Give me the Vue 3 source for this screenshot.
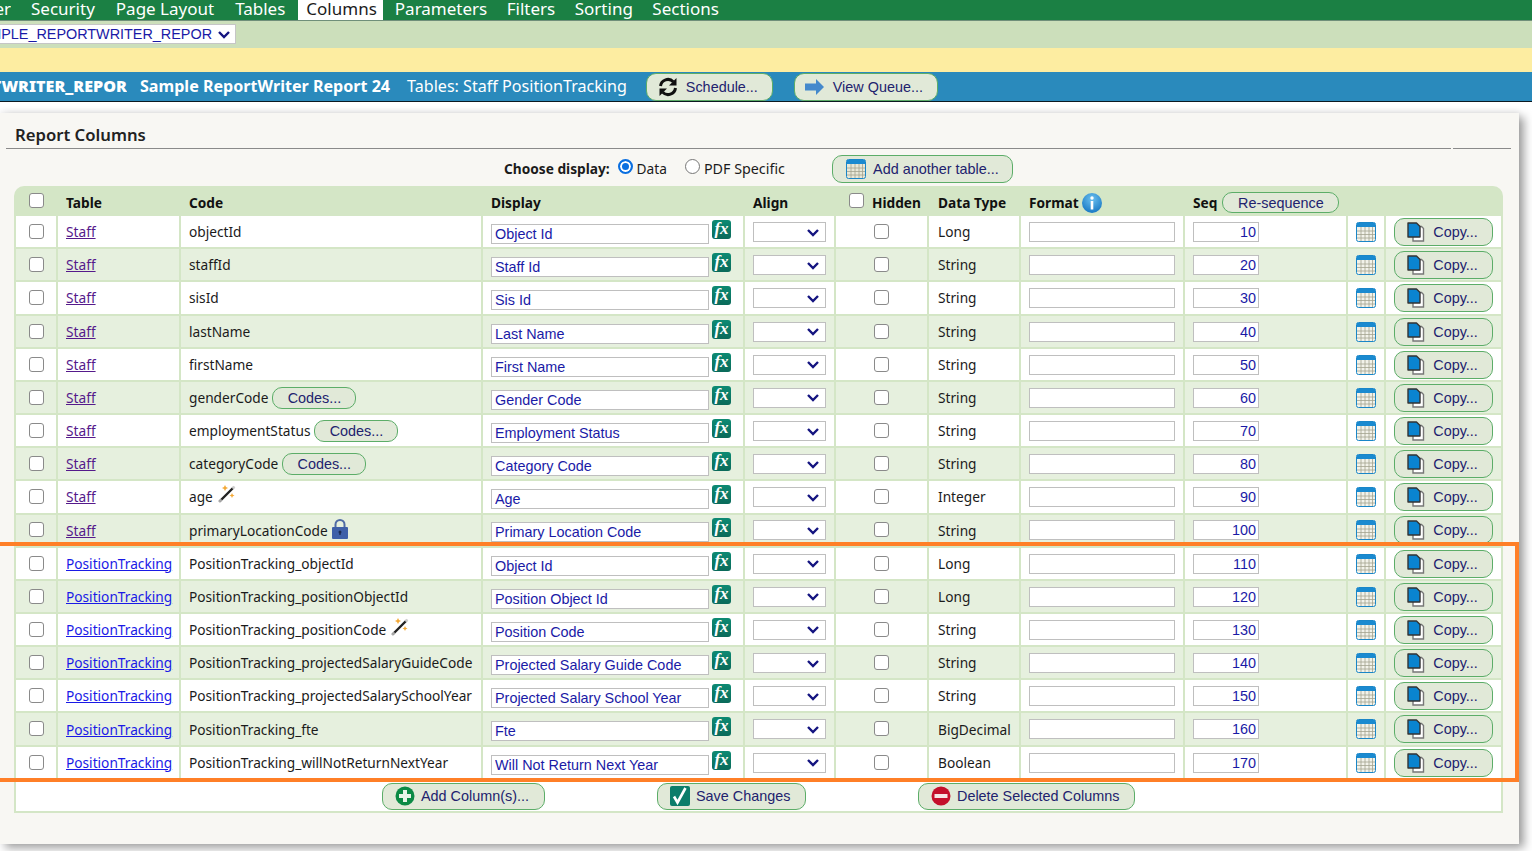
<script setup>
const nav = ['Security', 'Page Layout', 'Tables', 'Columns', 'Parameters', 'Filters', 'Sorting', 'Sections']
const staff = [
  ['objectId', 'Object Id'], ['staffId', 'Staff Id'], ['sisId', 'Sis Id'], ['lastName', 'Last Name'],
  ['firstName', 'First Name'], ['genderCode', 'Gender Code', 'codes'], ['employmentStatus', 'Employment Status', 'codes'],
  ['categoryCode', 'Category Code', 'codes'], ['age', 'Age', 'wand', 'Integer'], ['primaryLocationCode', 'Primary Location Code', 'lock']
]
const tracking = [
  ['PositionTracking_objectId', 'Object Id', '', 'Long'], ['PositionTracking_positionObjectId', 'Position Object Id', '', 'Long'],
  ['PositionTracking_positionCode', 'Position Code', 'wand'], ['PositionTracking_projectedSalaryGuideCode', 'Projected Salary Guide Code'],
  ['PositionTracking_projectedSalarySchoolYear', 'Projected Salary School Year'], ['PositionTracking_fte', 'Fte', '', 'BigDecimal'],
  ['PositionTracking_willNotReturnNextYear', 'Will Not Return Next Year', '', 'Boolean']
]
const rows = [
  ...staff.map(([code, display, extra, type], i) => ({ table: 'Staff', code, display, extra, type: type || (i === 0 ? 'Long' : 'String'), visited: true })),
  ...tracking.map(([code, display, extra, type]) => ({ table: 'PositionTracking', code, display, extra, type: type || 'String', visited: false }))
].map((r, i) => ({ ...r, seq: (i + 1) * 10 }))
</script>

<template>
  <div class="page">
    <nav class="nav">
      <span class="nav-cut">Designer</span>
      <a v-for="n in nav" :key="n" class="nav-item" :class="{ active: n === 'Columns' }">{{ n }}</a>
    </nav>
    <div class="subbar">
      <div class="pick-cut">
        <select class="pick"><option>SAMPLE_REPORTWRITER_REPOR</option></select>
      </div>
    </div>
    <div class="notice"></div>
    <header class="titlebar">
      <div class="id-cut"><b>SAMPLE_REPORTWRITER_REPOR</b></div>
      <b class="report-name">Sample ReportWriter Report 24</b>
      <span class="report-tables">Tables: Staff PositionTracking</span>
      <button class="btn schedule">
        <svg width="20" height="20" viewBox="0 0 20 20" fill="none" stroke="#111" stroke-width="3">
          <path d="M2.500 9a7.500 7.500 0 0 1 12.800-4.300" /><path d="M17.500 11a7.500 7.500 0 0 1-12.800 4.300" />
          <path d="M18.500 1v7.500H11z" fill="#111" stroke="none" /><path d="M1.500 19v-7.500H9z" fill="#111" stroke="none" />
        </svg>
        Schedule...
      </button>
      <button class="btn queue">
        <svg width="20" height="16" viewBox="0 0 20 16"><path d="M0 4.5h11V0l8 8-8 8v-4.5H0z" fill="#4489cc" /></svg>
        View Queue...
      </button>
    </header>

    <main class="panel">
      <div class="heading"><h2>Report Columns</h2></div>
      <div class="rules"><i></i><i></i></div>
      <div class="choose">
        <b>Choose display:</b>
        <label class="radio-label first"><input type="radio" name="display" class="radio" checked /> Data</label>
        <label class="radio-label pdf"><input type="radio" name="display" class="radio" /> PDF Specific</label>
        <button class="btn add-table">
          <svg class="cal" width="20" height="20" viewBox="0 0 20 20">
            <rect x=".5" y=".5" width="19" height="19" rx="2" fill="#e8e8d8" stroke="#1a86c8" />
            <path d="M1 1h18v4H1z" fill="#1a8ad0" />
            <path d="M1 9h18M1 12.500h18M1 16h18M5 5v14M9 5v14M13 5v14M16.500 5v14" stroke="#a3a38f" stroke-width=".8" />
          </svg>
          Add another table...
        </button>
      </div>

      <section class="grid">
        <div class="row head">
          <div class="cell center"><input type="checkbox" class="check" /></div>
          <div class="cell">Table</div>
          <div class="cell">Code</div>
          <div class="cell">Display</div>
          <div class="cell">Align</div>
          <div class="cell hidden-head"><input type="checkbox" class="check" /><span>Hidden</span></div>
          <div class="cell type">Data Type</div>
          <div class="cell"><span>Format</span>
            <svg class="info" width="20" height="20" viewBox="0 0 20 20">
              <defs>
                <radialGradient id="infoFill" cx=".5" cy=".3" r=".8">
                  <stop offset="0" stop-color="#6cc0ef" /><stop offset="1" stop-color="#0d6fbe" />
                </radialGradient>
              </defs>
              <circle cx="10" cy="10" r="10" fill="url(#infoFill)" />
              <circle cx="10" cy="5" r="1.700" fill="#fff" /><path d="M8.700 8h2.600v8.500H8.700z" fill="#fff" />
            </svg>
          </div>
          <div class="cell"><span>Seq</span><button class="btn reseq">Re-sequence</button></div>
          <div class="cell"></div>
          <div class="cell"></div>
        </div>
        <div class="body">
          <div v-for="(r, i) in rows" :key="r.code" class="row" :class="i % 2 ? 'alt' : 'plain'">
            <div class="cell center"><input type="checkbox" class="check" /></div>
            <div class="cell"><a class="link" :class="{ visited: r.visited }">{{ r.table }}</a></div>
            <div class="cell code">
              <span>{{ r.code }}</span>
              <button v-if="r.extra === 'codes'" class="btn codes">Codes...</button>
              <svg v-if="r.extra === 'wand'" class="wand" width="18" height="18" viewBox="0 0 18 18">
                <path d="M1.500 16.500 15.500 2.500" stroke="#222" stroke-width="2.400" />
                <path d="M1 17l2.500-2.500" stroke="#aaa" stroke-width="2.400" />
                <path d="M14.500 3.500 16.500 1.500" stroke="#ccc" stroke-width="2.400" />
                <path d="M7 0l1 2 2 1-2 1-1 2-1-2-2-1 2-1zM14 8l.8 1.700 1.700.8-1.700.8-.8 1.700-.8-1.700-1.700-.8 1.700-.8z" fill="#f3a937" />
              </svg>
              <svg v-if="r.extra === 'lock'" class="lock" width="16" height="20" viewBox="0 0 16 20">
                <path d="M3.500 9V5.500a4.500 4.500 0 0 1 9 0V9" fill="none" stroke="#4f6ba5" stroke-width="2" />
                <rect y="8" width="16" height="12" rx="1" fill="#3f60a8" />
                <circle cx="8" cy="13" r="1.500" fill="#1d2d55" /><path d="M7.300 13h1.400v3H7.300z" fill="#1d2d55" />
              </svg>
            </div>
            <div class="cell display">
              <input class="input name" :value="r.display" />
              <span class="fx">fx</span>
            </div>
            <div class="cell"><select class="align"><option></option></select></div>
            <div class="cell center"><input type="checkbox" class="check" /></div>
            <div class="cell type">{{ r.type }}</div>
            <div class="cell"><input class="input format" /></div>
            <div class="cell"><input class="input seq" :value="r.seq" /></div>
            <div class="cell center">
              <svg class="cal row-cal" width="20" height="20" viewBox="0 0 20 20">
                <rect x=".5" y=".5" width="19" height="19" rx="2" fill="#f2f2ea" stroke="#1a86c8" />
                <path d="M1 1h18v4H1z" fill="#1a8ad0" />
                <path d="M1 9h18M1 12.500h18M1 16h18M5 5v14M9 5v14M13 5v14M16.500 5v14" stroke="#a3a38f" stroke-width=".8" />
              </svg>
            </div>
            <div class="cell center">
              <button class="btn copy">
                <svg width="18" height="20" viewBox="0 0 18 20">
                  <path d="M6 4.500h8.500l2 2V19H6z" fill="#fff" stroke="#777" stroke-width="1.400" />
                  <path d="M1 1h8.500L13 4.500V15H1z" fill="#0a84d0" stroke="#333" stroke-width="1.400" stroke-linejoin="round" />
                </svg>
                Copy...
              </button>
            </div>
          </div>
        </div>
        <footer class="actions">
          <button class="btn action add">
            <svg width="20" height="20" viewBox="0 0 20 20">
              <circle cx="10" cy="10" r="9.500" fill="#0b8a45" />
              <path d="M8 4h4v4h4v4h-4v4H8v-4H4V8h4z" fill="#e8f4e8" />
            </svg>
            Add Column(s)...
          </button>
          <button class="btn action save">
            <svg width="20" height="20" viewBox="0 0 20 20">
              <rect width="20" height="20" rx="2" fill="#0b7d6a" />
              <path d="M4 10.500l3.500 6L15.500 2" fill="none" stroke="#fff" stroke-width="2.600" />
            </svg>
            Save Changes
          </button>
          <button class="btn action del">
            <svg width="20" height="20" viewBox="0 0 20 20">
              <circle cx="10" cy="10" r="9.500" fill="#c4102c" />
              <path d="M3.500 8h13v4h-13z" fill="#f6e6e6" />
            </svg>
            Delete Selected Columns
          </button>
        </footer>
      </section>
    </main>
    <div class="highlight"></div>
  </div>
</template>

<style>
html, body { margin: 0; background: #fff; overflow: hidden; }
</style>

<style scoped>
.page {
  position: relative;
  width: 1532px;
  height: 851px;
  overflow: hidden;
  font-family: "Noto Sans", "Open Sans", sans-serif;
  color: #1b1b1b;
  background: #fff;
}
.nav {
  display: flex;
  height: 20px;
  background: #1b8044;
  border-bottom: 1px solid #6f8f7a;
  font-size: 17px;
  line-height: 17px;
  color: #fff;
}
.nav-cut {
  width: 11px;
  margin-right: 20px;
  display: flex;
  justify-content: flex-end;
  overflow: hidden;
  white-space: nowrap;
}
.nav-item { margin-right: 21px; white-space: nowrap; }
.nav-item.active { background: #fff; color: #1b1b1b; padding: 0 6px 0 8px; margin: 0 12px 0 -8px; }
.active ~ .nav-item { margin-right: 19.500px; }
.subbar {
  height: 27px;
  background: #ccdfbb;
  box-sizing: border-box;
  padding-top: 3px;
}
.pick-cut { width: 236px; height: 20px; display: flex; justify-content: flex-end; overflow: hidden; }
.pick {
  flex: none;
  width: 267px;
  height: 20px;
  padding: 0 22px 0 0;
  appearance: none;
  border: 1px solid #c6c6c6;
  background: #fff url("data:image/svg+xml,%3Csvg xmlns='http://www.w3.org/2000/svg' width='14' height='9'%3E%3Cpath d='M2 2l5 5 5-5' fill='none' stroke='%23141480' stroke-width='2.400'/%3E%3C/svg%3E") no-repeat right 4px center;
  color: #1a1aa6;
  font: 14.400px "Liberation Sans", sans-serif;
}
.notice { height: 24px; background: #fdeda1; }
.titlebar {
  display: flex;
  align-items: center;
  height: 29px;
  background: #2a8abc;
  border-bottom: 1px solid #0c1a22;
  color: #fff;
  font-size: 16.100px;
  white-space: nowrap;
}
.id-cut, .report-name, .report-tables { margin-bottom: 2px; }
.id-cut { width: 127px; display: flex; justify-content: flex-end; overflow: hidden; font-weight: 700; }
.report-name { margin-left: 13px; }
.report-tables { margin-left: 17px; }
.btn {
  display: inline-flex;
  align-items: center;
  justify-content: center;
  gap: 8px;
  box-sizing: border-box;
  background: #e1e9d8;
  border: 1px solid #5cad68;
  border-radius: 10px;
  color: #22226e;
  font: 14.400px "Liberation Sans", sans-serif;
  padding: 0;
  white-space: nowrap;
}
.schedule { width: 127px; height: 28px; margin-left: 19px; padding-right: 3px; }
.queue { width: 144px; height: 28px; margin-left: 21px; padding-right: 4px; }
.panel {
  position: relative;
  box-sizing: border-box;
  width: 1519px;
  height: 731px;
  margin-top: 11px;
  background: #f8f7f3;
  box-shadow: 5px 4px 9px rgba(0, 0, 0, .38), 0 -3px 6px rgba(0, 0, 0, .05);
}
.heading { height: 35px; box-sizing: border-box; padding: 11px 0 0 15px; }
h2 { margin: 0; font-size: 16.700px; line-height: 22px; font-weight: 600; color: #222; }
.rules { display: flex; gap: 2px; margin-left: 6px; height: 1px; }
.rules i { background: #8a8a8a; width: 1445px; }
.rules i + i { width: 58px; }
.choose {
  display: flex;
  align-items: center;
  height: 37px;
  padding: 2px 0 0 504px;
  box-sizing: border-box;
  font-size: 13.700px;
}
.choose b { font-weight: 700; }
.radio-label { display: inline-flex; align-items: center; gap: 4px; }
.radio-label.first { margin-left: 8px; margin-right: 18px; }
.radio-label.pdf { font-size: 14.300px; }
.radio {
  appearance: none;
  width: 15px;
  height: 15px;
  margin: -4px 0 0;
  border: 1px solid #777;
  border-radius: 50%;
  background: #fff;
}
.radio:checked { border: 2px solid #0a6fe0; box-shadow: inset 0 0 0 2px #fff; background: #0a6fe0; }
.add-table { width: 181px; height: 28px; margin-left: 47px; gap: 7px; }
.grid {
  width: 1489px;
  margin-left: 14px;
  background: #d4e6c6;
  border-radius: 10px 10px 0 0;
}
.row {
  display: grid;
  grid-template-columns: 40px 121px 300px 260px 89px 91px 90px 162px 161px 36px 115px;
  column-gap: 2px;
  padding: 0 2px;
  height: 31.170px;
}
.body { display: flex; flex-direction: column; gap: 2px; }
.head { height: 30.100px; font-size: 13.700px; font-weight: 700; color: #111; }
.head .cell { background: transparent; padding-top: 3px; box-sizing: border-box; }
.head .cell.center { padding-top: 0; padding-bottom: 1px; }
.plain .cell { background: #fff; }
.alt .cell { background: #e6f0de; }
.cell {
  display: flex;
  align-items: center;
  padding-left: 8px;
  font-size: 13.700px;
  white-space: pre;
  min-width: 0;
}
.cell.center { padding-left: 0; justify-content: center; }
.cell.type { padding-left: 9px; }
.hidden-head { padding-left: 13px; }
.hidden-head span { margin-left: 8px; }
.head .hidden-head .check { margin-top: -4px; }
.check {
  appearance: none;
  width: 15px;
  height: 15px;
  margin: -.200px 0 0;
  border: 1.500px solid #8a8a8a;
  border-radius: 3px;
  background: #fff;
}
.link { color: #1a1ae6; text-decoration: underline; }
.link.visited { color: #551a8b; }
.codes { width: 84px; height: 22px; margin: .800px 0 0 4px; }
.wand { margin: -6px 0 0 5px; }
.lock { margin: -2px 0 0 4px; }
.input {
  box-sizing: border-box;
  height: 20px;
  border: 1.500px solid #bfbfbf;
  background: #fff;
  color: #1a1aa6;
  font: 14.400px "Liberation Sans", sans-serif;
  padding: 0 2px;
  outline: none;
}
.name { width: 218px; margin-top: 4.800px; padding-left: 3px; }
.fx {
  width: 19px;
  height: 19px;
  margin: -4.200px 0 0 3px;
  border-radius: 3px;
  background: linear-gradient(#0d8a73, #0a6a5a);
  color: #fff;
  font: italic 700 17px/17px "Liberation Serif", serif;
  text-align: center;
}
.align {
  appearance: none;
  box-sizing: border-box;
  width: 73px;
  height: 20px;
  margin-top: .800px;
  border: 1.500px solid #bfbfbf;
  background: #fff url("data:image/svg+xml,%3Csvg xmlns='http://www.w3.org/2000/svg' width='14' height='9'%3E%3Cpath d='M2 2l5 5 5-5' fill='none' stroke='%23141480' stroke-width='2.400'/%3E%3C/svg%3E") no-repeat right 5px center;
}
.format { width: 146px; margin-top: .800px; }
.seq { width: 66px; text-align: right; margin-top: .800px; }
.cal { flex: none; }
.row-cal { margin-top: .800px; }
.copy { width: 99px; height: 28px; padding-right: 2px; margin-top: .800px; }
.info { margin-left: 3px; }
.reseq { width: 117px; height: 21px; margin-left: 5px; }
.actions {
  position: relative;
  height: 34px;
  margin-top: 1px;
  background: #fff;
  border: 2px solid #d4e6c6;
  border-top: 0;
  box-sizing: border-box;
  display: flex;
  align-items: flex-start;
}
.action { height: 27px; margin-top: 4px; justify-content: flex-start; padding-left: 12px; gap: 6px; }
.add { width: 163px; margin-left: 366px; }
.save { width: 149px; margin-left: 112px; }
.del { width: 217px; margin-left: 112px; }
.highlight {
  position: absolute;
  left: -10px;
  top: 542px;
  width: 1529px;
  height: 240px;
  box-sizing: border-box;
  border: 4px solid #ff7f27;
  pointer-events: none;
}
</style>
